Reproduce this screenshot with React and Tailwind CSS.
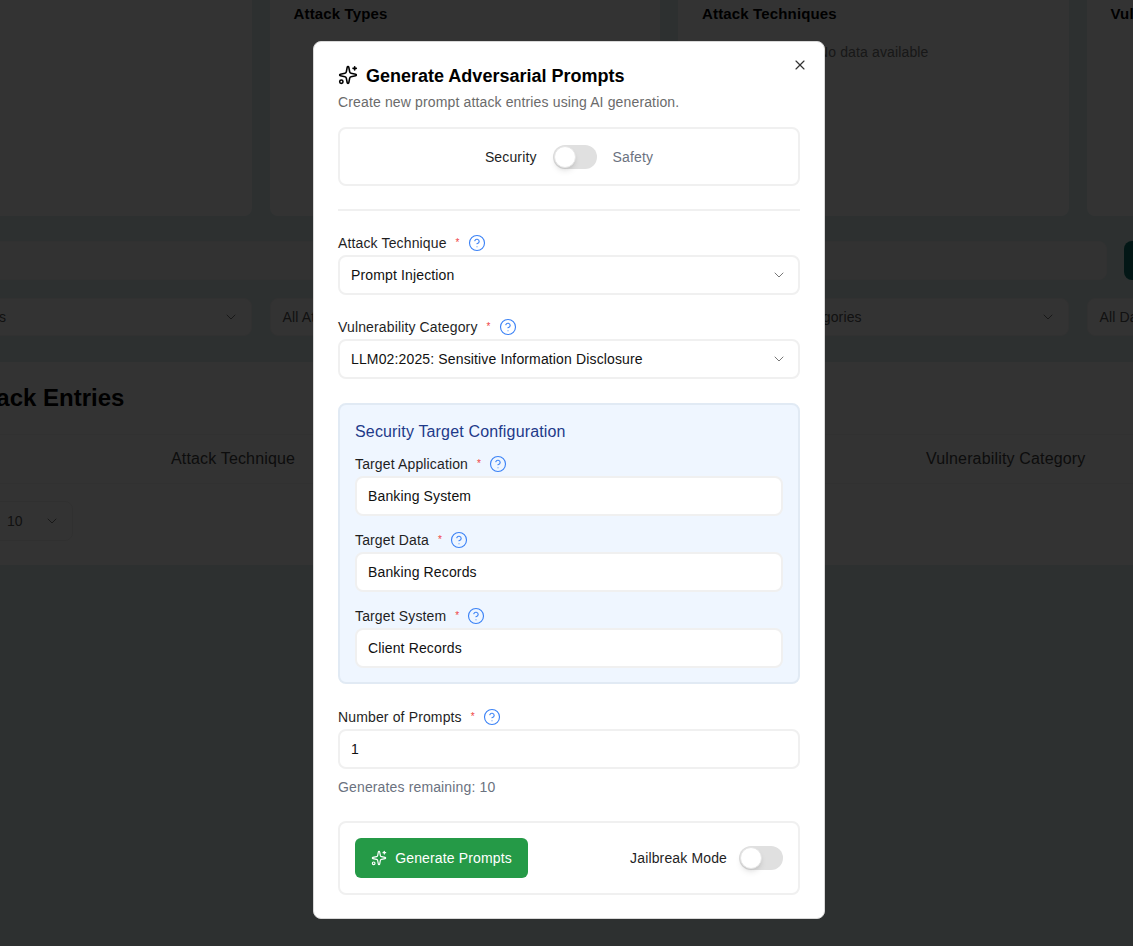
import React from "react";
import { Sparkles, CircleHelp, ChevronDown, X } from "lucide-react";

const font = "[font-family:'Liberation_Sans',Arial,sans-serif]";

function Label({ children, className = "" }) {
  return (
    <div className={`flex items-center h-5 text-sm leading-5 tracking-[0.01em] text-[#1f1f1f] ${className}`}>
      <span>{children}</span>
      <span className="ml-[9px] text-[10px] leading-4 text-[#ef4444]">*</span>
      <CircleHelp className="ml-[8px] text-[#3b82f6]" size={18} strokeWidth={1.5} />
    </div>
  );
}

function Field({ value, chevron }) {
  return (
    <div className="mt-[2px] flex items-center justify-between h-10 pl-[11px] pr-[11px] bg-white border-2 border-[#f0f0f0] rounded-lg text-sm tracking-[0.01em] text-[#111]">
      <span>{value}</span>
      {chevron && <ChevronDown size={16} strokeWidth={1.5} className="text-[#777]" />}
    </div>
  );
}

function Toggle() {
  return (
    <div className="relative w-11 h-6 rounded-full bg-[#e0e0e0]">
      <div className="absolute left-[1px] top-[1px] w-[22px] h-[22px] rounded-full bg-white border border-[#e5e5e5] shadow-md" />
    </div>
  );
}

function BgCard({ title, extra }) {
  return (
    <div className="h-[228px] rounded-lg bg-white px-6 pt-[14px]">
      {title && <div className="text-[15px] font-bold leading-6 tracking-[0.01em] text-black whitespace-nowrap">{title}</div>}
      {extra}
    </div>
  );
}

function BgSelect({ value }) {
  return (
    <div className="h-[38px] rounded-lg bg-white border border-[#f4f4f4] pl-3 pr-3 flex items-center justify-between text-sm tracking-[0.01em] text-[#555] whitespace-nowrap overflow-hidden">
      <span>{value}</span>
      <ChevronDown size={16} strokeWidth={1.5} className="text-[#777]" />
    </div>
  );
}

export default function App() {
  return (
    <div className={`relative w-[1133px] h-[946px] overflow-hidden bg-[#dff0f0] ${font}`}>
      {/* Page behind the dialog */}
      <div className="w-[1616px] -ml-[139px] -mt-[12px]">
        <div className="grid grid-cols-4 gap-[18px]">
          <BgCard />
          <BgCard title="Attack Types" />
          <BgCard
            title="Attack Techniques"
            extra={<div className="mt-[16px] text-center text-sm leading-5 tracking-[0.01em] text-[#777]">No data available</div>}
          />
          <BgCard title="Vulnerability Categories" />
        </div>
        <div className="mt-[25px] flex gap-[17px] h-[39px]">
          <div className="w-[1246px] rounded-lg bg-[#fbfbfb] border border-[#f4f4f4]" />
          <div className="w-[120px] rounded-lg bg-[#0f766e]" />
        </div>
        <div className="mt-[18px] grid grid-cols-4 gap-[18px]">
          <BgSelect value="All Attack Categories" />
          <BgSelect value="All Attack Techniques" />
          <BgSelect value="All Vulnerability Categories" />
          <BgSelect value="All Dates" />
        </div>
        <div className="mt-[26px] h-[203px] bg-white">
          <div className="h-[72px] pl-[102px] flex items-center text-2xl font-bold text-black">Attack Entries</div>
          <div className="h-[50px] border-y border-[#f3f3f3] bg-[#fdfdfd] text-base tracking-[0.01em] text-[#444] flex items-center whitespace-nowrap">
            <span className="ml-[310px] w-[124px]">Attack Technique</span>
            <span className="ml-[631px]">Vulnerability Category</span>
          </div>
          <div className="pt-[17px]">
            <div className="ml-[75px] w-[137px] h-10 rounded-lg border border-[#efefef] flex items-center justify-between pl-[70px] pr-[12px] text-sm text-[#555]">
              <span>10</span>
              <ChevronDown size={16} strokeWidth={1.5} className="text-[#777]" />
            </div>
          </div>
        </div>
      </div>

      {/* Overlay */}
      <div className="absolute inset-0 bg-black/80" />

      {/* Dialog */}
      <div className="absolute left-[313px] top-[41px] w-[512px] h-[878px] rounded-lg bg-white px-6 pt-[22px] border border-[#d8d8d8]">
        <X className="absolute right-[16px] top-[15px] text-[#333]" size={16} strokeWidth={1.75} />

        <div className="flex items-center gap-2 h-[24px]">
          <Sparkles size={20} strokeWidth={1.9} className="text-black -mt-[2px]" />
          <div className="text-lg leading-6 font-bold text-black">Generate Adversarial Prompts</div>
        </div>
        <div className="mt-[4px] text-sm leading-5 tracking-[0.01em] text-[#6b6b6b]">Create new prompt attack entries using AI generation.</div>

        <div className="mt-[15px] h-[59px] rounded-lg border-2 border-[#f0f0f0] flex items-center justify-center gap-4 text-sm tracking-[0.01em]">
          <span className="text-[#1f1f1f]">Security</span>
          <Toggle />
          <span className="text-[#6b7280]">Safety</span>
        </div>

        <div className="mt-[23px] h-[2px] bg-[#f0f0f0]" />

        <Label className="mt-[22px]">Attack Technique</Label>
        <Field value="Prompt Injection" chevron />

        <Label className="mt-[22px]">Vulnerability Category</Label>
        <Field value="LLM02:2025: Sensitive Information Disclosure" chevron />

        <div className="mt-[24px] h-[281px] rounded-lg bg-[#eff6ff] border-2 border-[#e1eaf4] px-[15px] pt-[15px]">
          <div className="text-base leading-6 tracking-[0.01em] text-[#1e3a8a]">Security Target Configuration</div>
          <Label className="mt-[10px]">Target Application</Label>
          <Field value="Banking System" />
          <Label className="mt-[14px]">Target Data</Label>
          <Field value="Banking Records" />
          <Label className="mt-[14px]">Target System</Label>
          <Field value="Client Records" />
        </div>

        <Label className="mt-[23px]">Number of Prompts</Label>
        <Field value="1" />

        <div className="mt-[8px] text-sm leading-5 tracking-[0.01em] text-[#6b7280]">Generates remaining: 10</div>

        <div className="mt-[24px] h-[74px] rounded-lg border-2 border-[#f0f0f0] flex items-center justify-between px-[15px]">
          <button className="flex items-center gap-2 h-10 w-[173px] justify-center rounded-md bg-[#259a47] text-white text-sm tracking-[0.01em]">
            <Sparkles size={16} strokeWidth={1.75} />
            <span>Generate Prompts</span>
          </button>
          <div className="flex items-center gap-3 text-sm tracking-[0.01em] text-[#1f1f1f]">
            <span>Jailbreak Mode</span>
            <Toggle />
          </div>
        </div>
      </div>
    </div>
  );
}
